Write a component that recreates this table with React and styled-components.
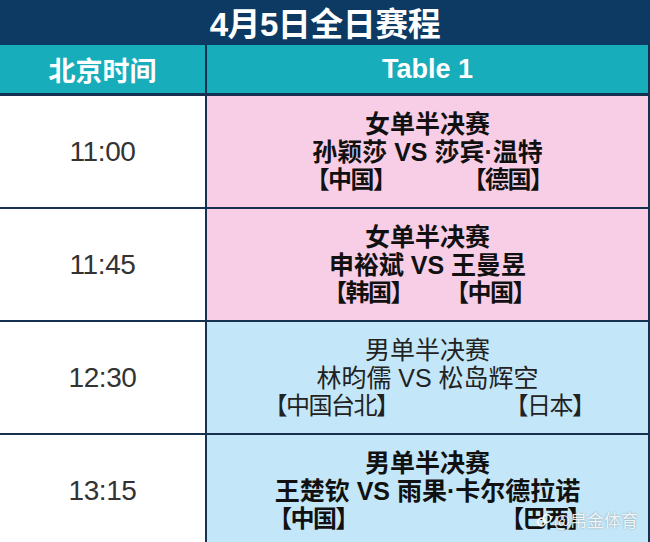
import React from "react";
import styled, { createGlobalStyle } from "styled-components";

const Global = createGlobalStyle`
  html, body { margin: 0; padding: 0; background: #ffffff; }
  body { width: 650px; height: 542px; overflow: hidden; }
  #root { width: 650px; height: 542px; overflow: hidden; }
`;

const FONT = `"Liberation Sans", "Noto Sans CJK SC", sans-serif`;

const Page = styled.div`
  position: relative;
  width: 650px;
  height: 542px;
  overflow: hidden;
  font-family: ${FONT};
  display: flex;
  flex-direction: column;
`;

const TitleBar = styled.div`
  height: 45px;
  background: #0c3a62;
  color: #ffffff;
  display: flex;
  align-items: center;
  justify-content: center;
  font-size: 33px;
  font-weight: 700;
  letter-spacing: -0.5px;
  padding-bottom: 2px;
  box-sizing: border-box;
`;

const Table = styled.div`
  display: grid;
  grid-template-columns: 205px 1fr;
  column-gap: 2px;
  row-gap: 2px;
  background: #15314f;
  padding-right: 2px;
`;

const HeadCell = styled.div`
  height: 48px;
  margin-bottom: 1px;
  background: #18adbb;
  color: #ffffff;
  font-weight: 700;
  font-size: 27px;
  display: flex;
  align-items: center;
  justify-content: center;
`;

const TimeCell = styled.div`
  height: 111px;
  background: #ffffff;
  color: #333333;
  font-size: 28px;
  display: flex;
  align-items: center;
  justify-content: center;
  letter-spacing: -0.4px;
`;

const MatchCell = styled.div`
  height: 111px;
  background: ${(p) => (p.$tone === "pink" ? "#f8cee6" : "#c3e7f8")};
  display: flex;
  flex-direction: column;
  align-items: center;
  justify-content: center;
  color: ${(p) => (p.$bold ? "#111111" : "#222222")};
  font-weight: ${(p) => (p.$bold ? 700 : 400)};
  font-size: 25px;
  line-height: 28px;
  padding-top: 1px;
  box-sizing: border-box;
`;

const Line = styled.div`
  white-space: nowrap;
`;

const Countries = styled.div`
  display: flex;
  justify-content: center;
  gap: ${(p) => p.$gap}px;
  white-space: nowrap;
  font-size: 24px;
  letter-spacing: -1.5px;
  padding-left: ${(p) => p.$shift}px;
`;

const Watermark = styled.div`
  position: absolute;
  right: 12px;
  bottom: 12px;
  display: flex;
  align-items: center;
  gap: 1px;
  color: rgba(255, 255, 255, 0.88);
  font-family: "Noto Sans CJK SC", sans-serif;
  font-size: 17px;
  line-height: 20px;
  text-shadow: 0 0 2px rgba(0, 0, 0, 0.35);
`;

const matches = [
  {
    time: "11:00",
    tone: "pink",
    bold: true,
    title: "女单半决赛",
    players: "孙颖莎 VS 莎宾·温特",
    left: "【中国】",
    right: "【德国】",
    gap: 67,
  },
  {
    time: "11:45",
    tone: "pink",
    bold: true,
    title: "女单半决赛",
    players: "申裕斌 VS 王曼昱",
    left: "【韩国】",
    right: "【中国】",
    gap: 32,
  },
  {
    time: "12:30",
    tone: "blue",
    bold: false,
    title: "男单半决赛",
    players: "林昀儒 VS 松岛辉空",
    left: "【中国台北】",
    right: "【日本】",
    gap: 106,
  },
  {
    time: "13:15",
    tone: "blue",
    bold: true,
    title: "男单半决赛",
    players: "王楚钦 VS 雨果·卡尔德拉诺",
    left: "【中国】",
    right: "【巴西】",
    gap: 142,
  },
];

export default function App() {
  return (
    <Page>
      <Global />
      <TitleBar>4月5日全日赛程</TitleBar>
      <Table>
        <HeadCell>北京时间</HeadCell>
        <HeadCell>Table 1</HeadCell>
        {matches.map((m) => (
          <React.Fragment key={m.time}>
            <TimeCell>{m.time}</TimeCell>
            <MatchCell $tone={m.tone} $bold={m.bold}>
              <Line>{m.title}</Line>
              <Line>{m.players}</Line>
              <Countries $gap={m.gap} $shift={3}>
                <span>{m.left}</span>
                <span>{m.right}</span>
              </Countries>
            </MatchCell>
          </React.Fragment>
        ))}
      </Table>
      <Watermark>
        <svg width="17" height="15" viewBox="0 0 17 15" aria-hidden="true">
          <circle cx="5.5" cy="9" r="3.8" fill="none" stroke="rgba(255,255,255,0.9)" strokeWidth="1.7" />
          <circle cx="11" cy="5.5" r="3.8" fill="none" stroke="rgba(255,255,255,0.9)" strokeWidth="1.7" />
        </svg>
        <span>@帛金体育</span>
      </Watermark>
    </Page>
  );
}
